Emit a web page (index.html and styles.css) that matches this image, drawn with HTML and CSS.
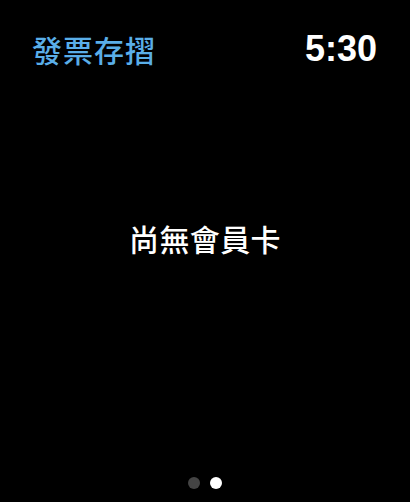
FILE: index.html
```html
<!DOCTYPE html>
<html lang="zh-Hant">
<head>
<meta charset="utf-8">
<link rel="stylesheet" href="styles.css">
</head>
<body>
<div class="screen">
  <header class="top">
    <div class="title">發票存摺</div>
    <div class="time">5:30</div>
  </header>
  <main class="content">
    <div class="empty">尚無會員卡</div>
  </main>
  <footer class="dots">
    <span class="dot"></span>
    <span class="dot active"></span>
  </footer>
</div>
</body>
</html>
```
FILE: styles.css
```css
html, body {
  margin: 0;
  padding: 0;
  background: #000;
}
.screen {
  width: 410px;
  height: 502px;
  display: flex;
  flex-direction: column;
  background: #000;
  font-family: "Noto Sans CJK TC", "Noto Sans", sans-serif;
}
.top {
  display: flex;
  justify-content: space-between;
  align-items: center;
  padding: 29px 33px 0 32px;
  height: 40px;
}
.title {
  color: #5aaee8;
  font-size: 30px;
  font-weight: 500;
  line-height: 40px;
  letter-spacing: 1px;
}
.time {
  color: #fff;
  font-family: "Liberation Sans", Arial, sans-serif;
  font-weight: 700;
  font-size: 36px;
  line-height: 40px;
}
.content {
  flex: 1;
  display: flex;
  align-items: center;
  justify-content: center;
  padding-bottom: 70px;
}
.empty {
  color: #fff;
  font-size: 30px;
  font-weight: 500;
  line-height: 40px;
  letter-spacing: 0.4px;
}
.dots {
  display: flex;
  justify-content: center;
  gap: 10px;
  padding-bottom: 13px;
}
.dot {
  width: 12px;
  height: 12px;
  border-radius: 50%;
  background: #444;
}
.dot.active {
  background: #fff;
}
```
